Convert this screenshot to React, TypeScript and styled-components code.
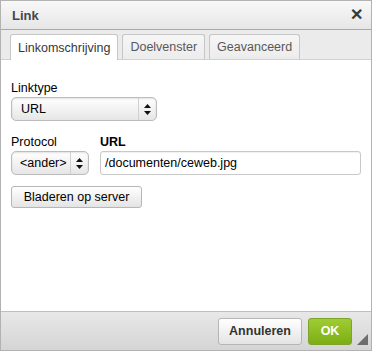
import React from 'react';
import styled, { createGlobalStyle } from 'styled-components';

const GlobalStyle = createGlobalStyle`
  html, body {
    margin: 0;
    padding: 0;
    background: #ffffff;
  }
  body {
    font-family: "Liberation Sans", Arial, Helvetica, sans-serif;
  }
`;

const Dialog = styled.div`
  position: relative;
  width: 372px;
  height: 351px;
  box-sizing: border-box;
  border: 1px solid #b2b2b2;
  display: flex;
  flex-direction: column;
  background: #fff;
  overflow: hidden;
`;

const TitleBar = styled.div`
  height: 28px;
  flex: none;
  display: flex;
  align-items: center;
  justify-content: space-between;
  padding: 0 8px 0 11px;
  background: linear-gradient(#f8f8f8, #e6e6e6);
  border-bottom: 1px solid #a9a9a9;
  font-size: 13px;
  font-weight: bold;
  color: #474747;
`;

const Close = styled.span`
  font-size: 16px;
  font-weight: bold;
  color: #3a3a3a;
  line-height: 1;
  margin-top: -1px;
`;

const TabsRow = styled.div`
  height: 29px;
  flex: none;
  display: flex;
  align-items: flex-end;
  gap: 4px;
  padding-left: 9px;
  background: #ebebeb;
  border-bottom: 1px solid #d1d1d1;
`;

const Tab = styled.div<{ $active?: boolean }>`
  height: ${(p) => (p.$active ? 26 : 25)}px;
  margin-bottom: ${(p) => (p.$active ? -1 : 0)}px;
  box-sizing: border-box;
  padding: 0 7px;
  display: flex;
  align-items: center;
  border: 1px solid #c6c6c6;
  border-bottom: none;
  border-radius: 3px 3px 0 0;
  background: ${(p) => (p.$active ? '#ffffff' : 'linear-gradient(#f6f6f6, #ececec)')};
  color: ${(p) => (p.$active ? '#383838' : '#595959')};
  font-size: 12.5px;
`;

const Body = styled.div`
  flex: 1;
  padding: 21px 10px 0 10px;
  display: flex;
  flex-direction: column;
  border-bottom: 1px solid #bfbfbf;
`;

const Field = styled.div<{ $grow?: boolean }>`
  display: flex;
  flex-direction: column;
  gap: 2px;
  flex: ${(p) => (p.$grow ? 1 : 'none')};
`;

const Label = styled.label<{ $bold?: boolean }>`
  font-size: 12.5px;
  line-height: 14px;
  color: #000;
  font-weight: ${(p) => (p.$bold ? 'bold' : 'normal')};
`;

const Row = styled.div`
  display: flex;
  gap: 11px;
  margin-top: 14px;
`;

const SelectBox = styled.div<{ $width: number }>`
  width: ${(p) => p.$width}px;
  height: 24px;
  box-sizing: border-box;
  display: flex;
  border: 1px solid #bcbcbc;
  border-radius: 5px;
  background: linear-gradient(#ffffff, #e6e6e6);
  box-shadow: inset 0 1px 2px rgba(0, 0, 0, 0.12);
  font-size: 12.5px;
  color: #000;
`;

const SelectValue = styled.div<{ $pad: number }>`
  flex: 1;
  display: flex;
  align-items: center;
  padding-left: ${(p) => p.$pad}px;
`;

const SelectArrow = styled.div`
  width: 17px;
  display: flex;
  align-items: center;
  justify-content: center;
  border-left: 1px solid #d0d0d0;
`;

const TextInput = styled.div`
  height: 24px;
  box-sizing: border-box;
  display: flex;
  align-items: center;
  padding-left: 4px;
  border: 1px solid #c9c9c9;
  border-radius: 3px;
  background: #fff;
  box-shadow: inset 0 1px 1px rgba(0, 0, 0, 0.06);
  font-size: 12.5px;
  color: #000;
`;

const Button = styled.div<{ $variant?: 'ok' | 'cancel' | 'plain' }>`
  box-sizing: border-box;
  display: inline-flex;
  align-items: center;
  justify-content: center;
  border-radius: 3px;
  font-size: 12.5px;
  ${(p) =>
    p.$variant === 'ok'
      ? `
    height: 27px;
    width: 44px;
    border: 1px solid #7da329;
    background: linear-gradient(#9fcc34, #7cae14);
    color: #fff;
    font-weight: bold;
  `
      : p.$variant === 'cancel'
      ? `
    height: 27px;
    width: 84px;
    border: 1px solid #b6b6b6;
    background: linear-gradient(#ffffff, #e4e4e4);
    color: #333;
    font-weight: bold;
  `
      : `
    height: 22px;
    border: 1px solid #b6b6b6;
    background: linear-gradient(#ffffff, #e4e4e4);
    color: #000;
  `}
`;

const BrowseButton = styled(Button)`
  align-self: flex-start;
  width: 131px;
  margin-top: 11px;
`;

const Footer = styled.div`
  height: 38px;
  flex: none;
  display: flex;
  align-items: center;
  justify-content: flex-end;
  gap: 6px;
  padding-right: 19px;
  background: linear-gradient(#e8e8e8, #d5d5d5);
`;

const Grip = styled.svg`
  position: absolute;
  right: 3px;
  bottom: 5px;
`;

const Arrows = () => (
  <svg width="7" height="11" viewBox="0 0 7 11">
    <path d="M3.5 0 L7 4 L0 4 Z" fill="#111" />
    <path d="M0 7 L7 7 L3.5 11 Z" fill="#111" />
  </svg>
);

export default function App() {
  return (
    <>
      <GlobalStyle />
      <Dialog>
        <TitleBar>
          <span>Link</span>
          <Close>✕</Close>
        </TitleBar>
        <TabsRow>
          <Tab $active>Linkomschrijving</Tab>
          <Tab>Doelvenster</Tab>
          <Tab>Geavanceerd</Tab>
        </TabsRow>
        <Body>
          <Field>
            <Label>Linktype</Label>
            <SelectBox $width={146}>
              <SelectValue $pad={9}>URL</SelectValue>
              <SelectArrow>
                <Arrows />
              </SelectArrow>
            </SelectBox>
          </Field>
          <Row>
            <Field>
              <Label>Protocol</Label>
              <SelectBox $width={78}>
                <SelectValue $pad={8}>&lt;ander&gt;</SelectValue>
                <SelectArrow>
                  <Arrows />
                </SelectArrow>
              </SelectBox>
            </Field>
            <Field $grow>
              <Label $bold>URL</Label>
              <TextInput>/documenten/ceweb.jpg</TextInput>
            </Field>
          </Row>
          <BrowseButton>Bladeren op server</BrowseButton>
        </Body>
        <Footer>
          <Button $variant="cancel">Annuleren</Button>
          <Button $variant="ok">OK</Button>
        </Footer>
        <Grip width="11" height="11" viewBox="0 0 11 11">
          <path d="M11 0 L11 11 L0 11 Z" fill="#6d6d6d" />
        </Grip>
      </Dialog>
    </>
  );
}
